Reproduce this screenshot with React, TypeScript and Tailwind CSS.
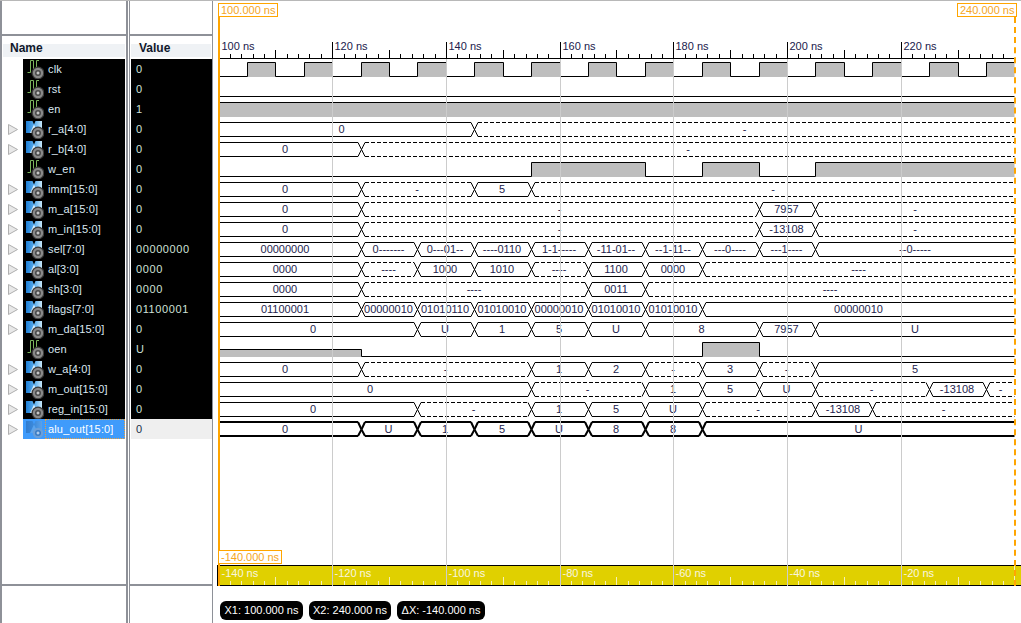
const X = (t: number) => Math.floor(219 + (t - 100) * 5.6857) + 0.5

type Seg = [number, string]

interface Signal {
  name: string
  value: string
  bus: boolean
  segs?: Seg[]
  levels?: [number, 'hi' | 'lo' | 'mid'][]
  thick?: boolean
}

const clkLevels: [number, 'hi' | 'lo'][] = []
for (let t = 105; t < 240; t += 5) clkLevels.push([t, (t - 100) % 10 === 5 ? 'lo' : 'hi'])
clkLevels.push([240, 'hi'])

const signals: Signal[] = [
  { name: 'clk', value: '0', bus: false, levels: clkLevels },
  { name: 'rst', value: '0', bus: false, levels: [[240, 'lo']] },
  { name: 'en', value: '1', bus: false, levels: [[240, 'hi']] },
  { name: 'r_a[4:0]', value: '0', bus: true, segs: [[145, '0'], [240, '-']] },
  { name: 'r_b[4:0]', value: '0', bus: true, segs: [[125, '0'], [240, '-']] },
  { name: 'w_en', value: '0', bus: false, levels: [[155, 'lo'], [175, 'hi'], [185, 'lo'], [195, 'hi'], [205, 'lo'], [240, 'hi']] },
  { name: 'imm[15:0]', value: '0', bus: true, segs: [[125, '0'], [145, '-'], [155, '5'], [240, '-']] },
  { name: 'm_a[15:0]', value: '0', bus: true, segs: [[125, '0'], [195, '-'], [205, '7957'], [240, '-']] },
  { name: 'm_in[15:0]', value: '0', bus: true, segs: [[125, '0'], [195, '-'], [205, '-13108'], [240, '-']] },
  {
    name: 'sel[7:0]',
    value: '00000000',
    bus: true,
    segs: [[125, '00000000'], [135, '0-------'], [145, '0---01--'], [155, '----0110'], [165, '1-1-----'], [175, '-11-01--'], [185, '--1-11--'], [195, '---0----'], [205, '---1----'], [240, '--0-----']],
  },
  { name: 'al[3:0]', value: '0000', bus: true, segs: [[125, '0000'], [135, '----'], [145, '1000'], [155, '1010'], [165, '----'], [175, '1100'], [185, '0000'], [240, '----']] },
  { name: 'sh[3:0]', value: '0000', bus: true, segs: [[125, '0000'], [165, '----'], [175, '0011'], [240, '----']] },
  {
    name: 'flags[7:0]',
    value: '01100001',
    bus: true,
    segs: [[125, '01100001'], [135, '00000010'], [145, '01010110'], [155, '01010010'], [165, '00000010'], [175, '01010010'], [185, '01010010'], [240, '00000010']],
  },
  { name: 'm_da[15:0]', value: '0', bus: true, segs: [[135, '0'], [145, 'U'], [155, '1'], [165, '5'], [175, 'U'], [195, '8'], [205, '7957'], [240, 'U']] },
  { name: 'oen', value: 'U', bus: false, levels: [[125, 'mid'], [185, 'lo'], [195, 'hi'], [240, 'lo']] },
  { name: 'w_a[4:0]', value: '0', bus: true, segs: [[125, '0'], [155, '-'], [165, '1'], [175, '2'], [185, '-'], [195, '3'], [205, '-'], [240, '5']] },
  { name: 'm_out[15:0]', value: '0', bus: true, segs: [[155, '0'], [175, '-'], [185, '1'], [195, '5'], [205, 'U'], [225, '-'], [235, '-13108'], [240, '-']] },
  { name: 'reg_in[15:0]', value: '0', bus: true, segs: [[135, '0'], [155, '-'], [165, '1'], [175, '5'], [185, 'U'], [205, '-'], [215, '-13108'], [240, '-']] },
  { name: 'alu_out[15:0]', value: '0', bus: true, thick: true, segs: [[125, '0'], [135, 'U'], [145, '1'], [155, '5'], [165, 'U'], [175, '8'], [185, '8'], [240, 'U']] },
]

const levelY = { hi: 3.5, lo: 17.5, mid: 10.5 }

function DigitalWave({ levels }: { levels: NonNullable<Signal['levels']> }) {
  let start = 100
  let d = ''
  const fills: React.ReactNode[] = []
  levels.forEach(([end, level], i) => {
    const x0 = X(start)
    const x1 = i === levels.length - 1 ? 1014.5 : X(end)
    const y = levelY[level]
    d += `${i === 0 ? 'M' : 'L'}${x0} ${y}L${x1} ${y}`
    if (level !== 'lo') fills.push(<rect key={i} x={x0} y={y} width={x1 - x0} height={18 - y} fill="#bebebe" />)
    start = end
  })
  return (
    <svg className="block w-[808px] h-5" viewBox="213 0 808 20">
      {fills}
      <path d={d} fill="none" stroke="#000" strokeWidth="1" />
    </svg>
  )
}

function BusWave({ segs, thick }: { segs: Seg[]; thick?: boolean }) {
  let start = 100
  return (
    <svg className="block w-[808px] h-5" viewBox="213 0 808 20">
      {segs.map(([end, label], i) => {
        const first = i === 0
        const last = i === segs.length - 1
        const x0 = first ? 219.5 : X(start)
        const x1 = last ? 1014.5 : X(end)
        start = end
        const dashed = /^-+$/.test(label)
        const top = thick ? 3 : 3.5
        const bot = thick ? 17 : 17.5
        const a = first ? x0 : x0 + 3.5
        const b = last ? x1 : x1 - 3.5
        const edges = `M${a} ${top}L${b} ${top}M${a} ${bot}L${b} ${bot}`
        const cx = (x0 + x1) / 2 - (first ? 5.5 : last ? 0 : 1)
        return (
          <g key={i}>
            <path d={edges} fill="none" stroke="#000" strokeWidth={thick ? 2 : 1} strokeDasharray={dashed ? '4 2' : undefined} />
            {!first && <path d={`M${x0} 10.5L${a} ${top}M${x0} 10.5L${a} ${bot}`} fill="none" stroke="#000" strokeWidth={thick ? 2 : 1} />}
            {!last && <path d={`M${x1} 10.5L${b} ${top}M${x1} 10.5L${b} ${bot}`} fill="none" stroke="#000" strokeWidth={thick ? 2 : 1} />}
            <text x={cx} y="14" textAnchor="middle" className="fill-[#24244e]">
              {label}
            </text>
          </g>
        )
      })}
    </svg>
  )
}

function Gear({ muted }: { muted?: boolean }) {
  return (
    <g>
      {!muted && <circle cx="14" cy="14" r="6.5" fill="#3a3a3a" />}
      <circle cx="14" cy="14" r="5.2" fill={muted ? '#6b9fd8' : '#8a8a8a'} />
      <circle cx="14" cy="14" r="3" fill={muted ? '#3a7cc4' : '#4a4a4a'} />
      <path d="M12.5 14H15.5M14 12.5V15.5" stroke={muted ? '#cfe4fb' : '#eeeeee'} strokeWidth="1" />
    </g>
  )
}

function SignalIcon() {
  return (
    <svg className="w-5 h-5 shrink-0" viewBox="0 0 20 20">
      <path d="M3.5 13.5H6.5V1.5H9.5V13.5H12.5V1.5H15" fill="none" stroke="#79b35c" strokeWidth="1" />
      <Gear />
    </svg>
  )
}

function BusIcon({ selected }: { selected?: boolean }) {
  const id = selected ? 'busSel' : 'bus'
  return (
    <svg className="w-5 h-5 shrink-0" viewBox="0 0 20 20">
      <defs>
        <linearGradient id={id} x1="0" y1="0" x2="1" y2="0">
          <stop offset="0" stopColor={selected ? '#2f7cd0' : '#1f7fd6'} />
          <stop offset="0.55" stopColor={selected ? '#3f8cdc' : '#5db0ee'} />
          <stop offset="1" stopColor={selected ? '#5aa2ea' : '#c8e8fa'} />
        </linearGradient>
      </defs>
      <path d="M2 2H8.5L10 5.5L11.5 2H18V14H2Z" fill={`url(#${id})`} />
      <path d="M10 5.5L14 14H6Z" fill={selected ? '#5aa4ee' : '#d8eefb'} />
      <Gear muted={selected} />
    </svg>
  )
}

function Expander() {
  return (
    <svg className="w-[21px] h-5 shrink-0" viewBox="0 0 21 20">
      <path d="M6.5 5.5V15.5L15.5 10.5Z" fill="#e8e8e8" stroke="#b0b0b0" strokeWidth="1" />
    </svg>
  )
}

function NameRow({ signal, selected }: { signal: Signal; selected: boolean }) {
  return (
    <div className="flex h-5 pr-px">
      {signal.bus ? <Expander /> : <div className="w-[21px] shrink-0" />}
      <div className={`flex flex-1 items-center pl-[1px] ${selected ? 'bg-[#3f9bfb]' : 'bg-black'}`}>
        {signal.bus ? <BusIcon selected={selected} /> : <SignalIcon />}
        <span
          className={`ml-[1px] pl-[2px] flex-1 h-full flex items-center text-[11px] tracking-[0.15px] border border-dotted ${
            selected ? 'text-white border-[#e8a040]' : 'text-[#dbe8f2] border-transparent'
          }`}
        >
          {signal.name}
        </span>
      </div>
    </div>
  )
}

function ValueRow({ signal, selected }: { signal: Signal; selected: boolean }) {
  return (
    <div className={`h-5 flex items-center pl-[5px] text-[11px] tracking-[0.6px] ${selected ? 'bg-[#efefef] text-[#20304a]' : 'bg-black text-[#cfe0d8]'}`}>
      {signal.value}
    </div>
  )
}

const majors = [120, 140, 160, 180, 200, 220]

function TopRuler() {
  const ticks: React.ReactNode[] = []
  for (let t = 102; t < 240; t += 2) {
    const x = X(t)
    const h = t % 20 === 0 ? 42 : t % 10 === 0 ? 50 : 54
    ticks.push(<path key={t} d={`M${x} ${h}V58`} stroke="#000" />)
  }
  return (
    <svg className="block w-[808px] h-[58px]" viewBox="213 1 808 58">
      {ticks}
      <path d="M219 58.5H1015" stroke="#000" />
      {[100, ...majors].map((t) => (
        <text key={t} x={X(t) + 2} y="50" className="fill-[#20204c]">
          {t} ns
        </text>
      ))}
    </svg>
  )
}

function BottomRuler() {
  const ticks: React.ReactNode[] = []
  for (let t = 102; t <= 240; t += 2) {
    const x = X(t)
    const h = t % 20 === 0 ? 566 : t % 10 === 0 ? 577 : 581
    ticks.push(<path key={t} d={`M${x} ${h}V585`} stroke="#f4f0b8" />)
  }
  return (
    <div className="h-[21px] ml-1 bg-[#e0d000] border-y border-l border-black">
      <svg className="block w-[803px] h-[19px]" viewBox="218 566 803 19">
        {ticks}
        {[100, ...majors].map((t) => (
          <text key={t} x={X(t) + 2} y="577" className="fill-[#f8f6e0]">
            -{240 - t} ns
          </text>
        ))}
      </svg>
    </div>
  )
}

function MarkerFlag({ className, label }: { className: string; label: string }) {
  return (
    <div className={`absolute h-[14px] flex items-center px-[2px] bg-white border border-[#ffa500] text-[11px] leading-none text-[#f5a623] ${className}`}>
      {label}
    </div>
  )
}

function Chip({ children, width }: { children: string; width: string }) {
  return (
    <div className={`h-[19px] ${width} rounded-md bg-black text-white text-[11px] flex items-center justify-center`}>
      {children}
    </div>
  )
}

const rule = 'border-[#8e9198]'

export default function App() {
  return (
    <div className="w-[1021px] h-[623px] overflow-hidden bg-white border-t border-[#b8b8b8] flex font-['Liberation_Sans',sans-serif]">
      {/* names */}
      <div className={`w-[128px] flex flex-col border-x-2 ${rule}`}>
        <div className={`h-[35px] border-b-2 ${rule}`} />
        <div className="h-[23px] pt-2 px-px">
          <div className="h-[13px] flex items-center pl-[7px] pb-[5px] bg-[#eff2f5] text-xs leading-none font-bold text-[#10182c]">Name</div>
        </div>
        {signals.map((s, i) => (
          <NameRow key={s.name} signal={s} selected={i === signals.length - 1} />
        ))}
        <div className={`flex-1 border-b-2 ${rule}`} />
        <div className="h-[37px]" />
      </div>

      {/* values */}
      <div className={`w-[84px] ml-px flex flex-col border-x ${rule}`}>
        <div className={`h-[35px] border-b-2 ${rule}`} />
        <div className="h-[23px] pt-2 px-px">
          <div className="h-[13px] flex items-center pl-2 pb-[5px] bg-[#eff2f5] text-xs leading-none font-bold text-[#10182c]">Value</div>
        </div>
        <div className="pl-px">
          {signals.map((s, i) => (
            <ValueRow key={s.name} signal={s} selected={i === signals.length - 1} />
          ))}
        </div>
        <div className={`flex-1 border-b-2 ${rule}`} />
        <div className="h-[37px]" />
      </div>

      {/* waves */}
      <div className="relative flex-1 flex flex-col text-[11px]">
        <TopRuler />
        {signals.map((s) =>
          s.segs ? <BusWave key={s.name} segs={s.segs} thick={s.thick} /> : <DigitalWave key={s.name} levels={s.levels!} />,
        )}
        <div className="flex-1" />
        <BottomRuler />
        <div className="h-[37px] pt-[15px] pl-[7px] flex gap-[6px]">
          <Chip width="w-[83px]">X1: 100.000 ns</Chip>
          <Chip width="w-[82px]">X2: 240.000 ns</Chip>
          <Chip width="w-[88px]">ΔX: -140.000 ns</Chip>
        </div>

        {majors.map((t) => (
          <div key={t} className="absolute top-[58px] bottom-[37px] w-px bg-[#cccccc]" style={{ left: X(t) - 213.5 }} />
        ))}
        <div className="absolute left-[5px] top-[16px] bottom-[37px] w-[2px] bg-[#ffa500]" />
        <div className="absolute left-[801px] top-[16px] bottom-[37px] border-l-2 border-dashed border-[#ffa500]" />
        <MarkerFlag className="left-[5px] top-[2px]" label="100.000 ns" />
        <MarkerFlag className="left-[744px] top-[2px]" label="240.000 ns" />
        <MarkerFlag className="left-[5px] top-[549px]" label="-140.000 ns" />
      </div>
    </div>
  )
}
